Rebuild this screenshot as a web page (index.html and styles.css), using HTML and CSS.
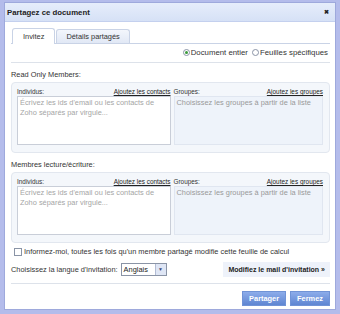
FILE: index.html
```html
<!DOCTYPE html>
<html lang="fr">
<head>
    <meta charset="UTF-8">
    <title>Partagez ce document</title>
    <link rel="stylesheet" href="styles.css">
</head>
<body>
    <div class="dialog">
        <div class="inner">
            <div class="titlebar">
                <span class="title">Partagez ce document</span>
                <span class="close">&#10006;</span>
            </div>
            <div class="content">
                <div class="tabs">
                    <div class="tab active">Invitez</div>
                    <div class="tab">Détails partagés</div>
                </div>
                <div class="scope">
                    <label class="radio"><span class="dot on"></span>Document entier</label>
                    <label class="radio"><span class="dot"></span>Feuilles spécifiques</label>
                </div>

                <div class="section-title">Read Only Members:</div>
                <div class="box">
                    <div class="col left">
                        <div class="col-head"><span>Individus:</span><a href="#">Ajoutez les contacts</a></div>
                        <div class="textarea">Écrivez les ids d'email ou les contacts de Zoho séparés par virgule...</div>
                    </div>
                    <div class="col right">
                        <div class="col-head"><span>Groupes:</span><a href="#">Ajoutez les groupes</a></div>
                        <div class="groups">Choisissez les groupes à partir de la liste</div>
                    </div>
                </div>

                <div class="section-title">Membres lecture/écriture:</div>
                <div class="box">
                    <div class="col left">
                        <div class="col-head"><span>Individus:</span><a href="#">Ajoutez les contacts</a></div>
                        <div class="textarea">Écrivez les ids d'email ou les contacts de Zoho séparés par virgule...</div>
                    </div>
                    <div class="col right">
                        <div class="col-head"><span>Groupes:</span><a href="#">Ajoutez les groupes</a></div>
                        <div class="groups">Choisissez les groupes à partir de la liste</div>
                    </div>
                </div>

                <label class="notify"><span class="check"></span>Informez-moi, toutes les fois qu'un membre partagé modifie cette feuille de calcul</label>

                <div class="lang-row">
                    <span>Choisissez la langue d'invitation:</span>
                    <span class="select">Anglais<span class="arrow">&#9660;</span></span>
                    <span class="mail-btn">Modifiez le mail d'invitation »</span>
                </div>

                <div class="actions">
                    <span class="btn">Partager</span>
                    <span class="btn">Fermez</span>
                </div>
            </div>
        </div>
    </div>
</body>
</html>
```

FILE: styles.css
```css
body { margin: 0; font-family: "Liberation Sans", Arial, sans-serif; font-size: 7.4px; line-height: 9px; color: #333; background: #b4bceb; }
.dialog { width: 340px; height: 314px; box-sizing: border-box; padding: 2px 4px 4px 4px; background: #b4bceb; }
.inner { height: 100%; box-sizing: border-box; background: #fff; border: 1px solid #9ea9dc; display: flex; flex-direction: column; overflow: hidden; }
.titlebar { height: 18px; flex-shrink: 0; display: flex; align-items: center; justify-content: space-between; padding: 0 6px 0 2px; background: linear-gradient(#e6edfb, #d6e1f6); border-bottom: 1px solid #c4d0ee; }
.title { font-weight: bold; font-size: 7.8px; color: #222; }
.close { font-size: 6px; color: #222; font-weight: bold; }
.content { padding: 6px 5px 0 6px; display: flex; flex-direction: column; }
.tabs { display: flex; gap: 1px; padding-left: 1px; border-bottom: 1px solid #c9d3e6; height: 15px; align-items: flex-end; }
.tab { height: 14px; line-height: 14px; padding: 0 9px; border: 1px solid #c9d3e6; border-bottom: none; border-radius: 3px 3px 0 0; background: linear-gradient(#f3f6fc, #e1e8f5); color: #333; box-sizing: border-box; }
.tab.active { background: #fff; height: 16px; line-height: 15px; margin-bottom: -1px; padding: 0 10px; }
.scope { display: flex; justify-content: flex-end; gap: 4px; height: 9px; padding: 4px 2px 5px; border-bottom: 1px solid #dde2ea; font-size: 7.8px; }
.radio { display: flex; align-items: center; gap: 1px; }
.dot { width: 7px; height: 7px; border: 1px solid #8a94a6; border-radius: 50%; box-sizing: border-box; background: #fff; display: inline-flex; align-items: center; justify-content: center; }
.dot.on::after { content: ""; width: 3px; height: 3px; border-radius: 50%; background: #3a9a3a; }
.section-title { margin: 7px 0 3px 0; }
.box { display: flex; gap: 3px; border: 1px solid #e2e7ef; border-radius: 4px; background: #f4f7fb; padding: 4px 6px 7px 5px; }
.col { display: flex; flex-direction: column; }
.col.left { width: 154px; }
.col.right { width: 150px; }
.col-head { display: flex; justify-content: space-between; font-size: 6.4px; line-height: 9px; }
.col-head a { color: #222; text-decoration: underline; }
.textarea { height: 49px; box-sizing: border-box; border: 1px solid #c9ced8; background: #fff; color: #a5a5a5; padding: 1px 2px; line-height: 10px; }
.groups { height: 49px; box-sizing: border-box; border: 1px solid #e0e6f0; background: #eef3fa; color: #999; padding: 1px 2px; line-height: 10px; }
.notify { display: flex; align-items: center; gap: 2px; margin: 4px 0 0 3px; }
.check { width: 8px; height: 8px; border: 1px solid #8a94a6; box-sizing: border-box; background: #fff; }
.lang-row { display: flex; align-items: center; gap: 3px; margin-top: 6px; padding-bottom: 6px; border-bottom: 1px solid #dde2ea; }
.select { display: inline-flex; align-items: center; justify-content: space-between; width: 46px; height: 13px; box-sizing: border-box; border: 1px solid #8a94a6; background: #fff; padding-left: 2px; color: #222; }
.arrow { width: 10px; height: 11px; background: #dfe6f5; border-left: 1px solid #b2bcd4; font-size: 5px; color: #3a4a7a; display: inline-flex; align-items: center; justify-content: center; }
.mail-btn { margin-left: auto; height: 15px; line-height: 15px; padding: 0 5px; background: #eef2fa; font-weight: bold; color: #222; font-size: 7px; }
.actions { display: flex; justify-content: flex-end; gap: 4px; margin-top: 7px; }
.btn { height: 15px; line-height: 13px; box-sizing: border-box; padding: 0 6px; background: linear-gradient(#8cacea, #5f86d2); color: #fff; font-weight: bold; border: 1px solid #7093d6; }
```
